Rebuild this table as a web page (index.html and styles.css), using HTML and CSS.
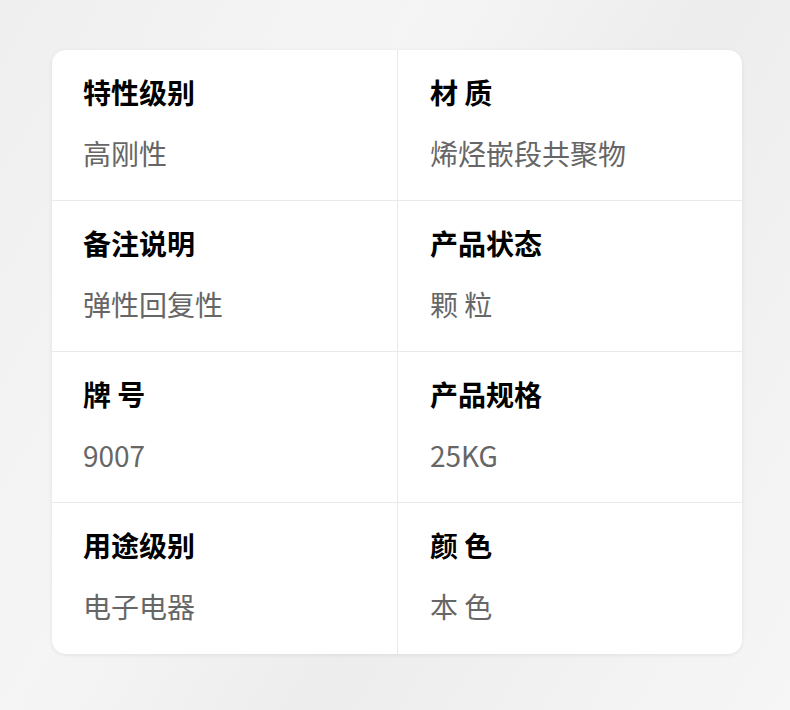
FILE: index.html
```html
<!DOCTYPE html>
<html lang="zh-CN">
<head>
    <meta charset="UTF-8">
    <meta name="viewport" content="width=device-width, initial-scale=1.0">
    <title>产品参数</title>
    <link rel="stylesheet" href="styles.css">
</head>
<body>

    <!-- Spec card -->
    <div class="spec-card">
        <div class="spec-cell">
            <div class="spec-label">特性级别</div>
            <div class="spec-value">高刚性</div>
        </div>
        <div class="spec-cell">
            <div class="spec-label">材 质</div>
            <div class="spec-value">烯烃嵌段共聚物</div>
        </div>
        <div class="spec-cell">
            <div class="spec-label">备注说明</div>
            <div class="spec-value">弹性回复性</div>
        </div>
        <div class="spec-cell">
            <div class="spec-label">产品状态</div>
            <div class="spec-value">颗 粒</div>
        </div>
        <div class="spec-cell">
            <div class="spec-label">牌 号</div>
            <div class="spec-value">9007</div>
        </div>
        <div class="spec-cell">
            <div class="spec-label">产品规格</div>
            <div class="spec-value">25KG</div>
        </div>
        <div class="spec-cell">
            <div class="spec-label">用途级别</div>
            <div class="spec-value">电子电器</div>
        </div>
        <div class="spec-cell">
            <div class="spec-label">颜 色</div>
            <div class="spec-value">本 色</div>
        </div>
    </div>

</body>
</html>
```

FILE: styles.css
```css
html, body {
    height: 100%;
}
body {
    margin: 0;
    padding: 50px 0 0 52px;
    box-sizing: border-box;
    font-family: "Noto Sans CJK SC", "Noto Sans", sans-serif;
    background: linear-gradient(120deg, #efefef 0%, #f5f5f5 35%, #ededed 60%, #f6f6f6 100%);
}
.spec-card {
    width: 690px;
    background-color: #fff;
    border-radius: 14px;
    box-shadow: 0 1px 4px rgba(0, 0, 0, 0.08);
    display: grid;
    grid-template-columns: 345px 345px;
    grid-template-rows: 150px 151px 151px 152px;
    overflow: hidden;
}
.spec-cell {
    padding: 26px 0 0 31px;
    border-top: 1px solid #e9e9e9;
}
.spec-cell:nth-child(-n+2) {
    border-top: none;
}
.spec-cell:nth-child(even) {
    border-left: 1px solid #e9e9e9;
    padding-left: 32px;
}
.spec-label {
    font-size: 28px;
    line-height: 32px;
    font-weight: bold;
    color: #000;
}
.spec-value {
    margin-top: 29px;
    font-size: 28px;
    line-height: 32px;
    color: #666;
}
```
